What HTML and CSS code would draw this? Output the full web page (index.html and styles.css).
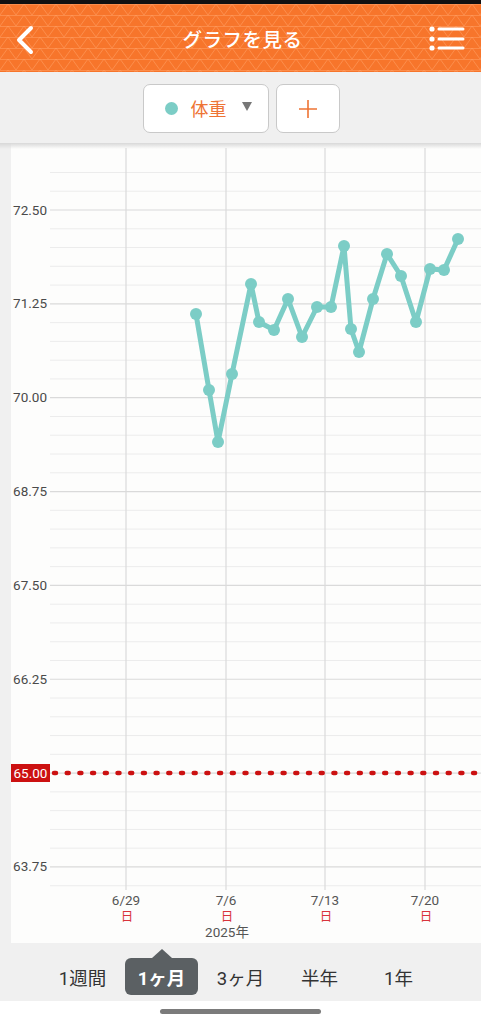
FILE: index.html
```html
<!DOCTYPE html>
<html lang="ja">
<head>
    <meta charset="UTF-8">
    <meta name="viewport" content="width=device-width, initial-scale=1.0">
    <title>グラフを見る</title>
    <link rel="stylesheet" href="styles.css">
</head>
<body>
    <div class="status"></div>
    <header class="topbar">
        <button class="icon-btn back">
            <svg width="24" height="32" viewBox="0 0 24 32"><path d="M17 4 L5 16 L17 28" fill="none" stroke="#fff" stroke-width="4" stroke-linecap="round" stroke-linejoin="round"/></svg>
        </button>
        <h1 class="title">グラフを見る</h1>
        <button class="icon-btn menu">
            <svg width="36" height="26" viewBox="0 0 36 26">
                <circle cx="3" cy="3" r="2.6" fill="#fff"/>
                <circle cx="3" cy="13" r="2.6" fill="#fff"/>
                <circle cx="3" cy="22" r="2.6" fill="#fff"/>
                <path d="M10 3 H34 M10 13 H34 M10 22 H34" stroke="#fff" stroke-width="3" stroke-linecap="round"/>
            </svg>
        </button>
    </header>

    <div class="toolbar">
        <button class="select">
            <span class="dot"></span>
            <span class="select-label">体重</span>
            <span class="caret"></span>
        </button>
        <button class="add">
            <svg width="20" height="20" viewBox="0 0 20 20"><path d="M10 1 V19 M1 10 H19" stroke="#ee7434" stroke-width="1.6"/></svg>
        </button>
    </div>

    <main class="chart-area">
        <div class="chart-card">
            <svg id="chart" width="470" height="795" viewBox="11 148 470 795"></svg>
        </div>
    </main>

    <nav class="tabs">
        <button class="tab">1週間</button>
        <button class="tab active">1ヶ月</button>
        <button class="tab">3ヶ月</button>
        <button class="tab">半年</button>
        <button class="tab">1年</button>
    </nav>
    <div class="home-bar"><span class="indicator"></span></div>

    <script>
        const svg = document.getElementById('chart');
        const NS = 'http://www.w3.org/2000/svg';

        function el(name, attrs, text) {
            const node = document.createElementNS(NS, name);
            for (const k in attrs) node.setAttribute(k, attrs[k]);
            if (text) node.textContent = text;
            svg.appendChild(node);
            return node;
        }

        // value -> y in page coords
        function yOf(v) {
            return 210 + (72.5 - v) / 0.25 * 18.77;
        }

        // horizontal grid, every 0.25kg
        for (let i = 0; i <= 38; i++) {
            const v = 73 - i * 0.25;
            const y = yOf(v);
            const major = i % 5 === 2;
            el('line', { x1: 50, x2: 481, y1: y, y2: y, class: major ? 'grid-major' : 'grid-minor' });
            if (major && Math.abs(v - 65) > 0.01) {
                el('text', { x: 47, y: y + 4.5, class: 'y-label' }, v.toFixed(2));
            }
        }

        // weeks
        const weeks = [[126, '6/29'], [226, '7/6'], [325, '7/13'], [425, '7/20']];
        weeks.forEach(([x, label]) => {
            el('line', { x1: x, x2: x, y1: 148, y2: 890, class: 'grid-major' });
            el('text', { x: x, y: 905, class: 'x-label' }, label);
            el('text', { x: x + 1, y: 921, class: 'x-day' }, '日');
        });
        el('text', { x: 227, y: 937, class: 'x-label' }, '2025年');

        // target line
        el('line', { x1: 54, x2: 481, y1: 773, y2: 773, class: 'target' });
        el('rect', { x: 11, y: 764, width: 39, height: 18, class: 'target-box' });
        el('text', { x: 30.5, y: 778, class: 'target-text' }, '65.00');

        // weight points
        const pts = [
            [196, 314], [209, 390], [218, 442], [232, 374], [251, 284], [259, 322],
            [274, 330], [288, 299], [302, 337], [317, 307], [331, 307], [344, 246],
            [351, 329], [359, 352], [373, 299], [387, 254], [401, 276], [416, 322],
            [430, 269], [444, 270], [458, 239]
        ];
        el('polyline', { points: pts.map(p => p.join(',')).join(' '), class: 'series' });
        pts.forEach(([x, y]) => el('circle', { cx: x, cy: y, r: 6, class: 'series-dot' }));
    </script>
</body>
</html>
```

FILE: styles.css
```css
* {
    box-sizing: border-box;
}
body {
    margin: 0;
    font-family: Roboto, "Noto Sans CJK JP", sans-serif;
    background: #fff;
    width: 481px;
    height: 1024px;
    overflow: hidden;
}
button {
    font-family: inherit;
    cursor: pointer;
}
.status {
    height: 4px;
    background: #111;
}
.topbar {
    height: 68px;
    background-color: #f7752b;
    background-image: url("data:image/svg+xml,%3Csvg xmlns='http://www.w3.org/2000/svg' width='16' height='11'%3E%3Cpath d='M0 11 L8 0 L16 11 M0 0.5 H16' fill='none' stroke='%23ff9d60' stroke-width='1' opacity='0.6'/%3E%3C/svg%3E");
    display: flex;
    align-items: center;
    justify-content: space-between;
    padding: 0 16px 0 14px;
}
.icon-btn {
    background: none;
    border: none;
    padding: 0;
    display: flex;
    align-items: center;
}
.back {
    width: 30px;
    margin-top: 3px;
}
.menu {
    margin-top: 2px;
}
.title {
    margin: 0;
    color: #fff;
    font-size: 19.5px;
    font-weight: 500;
    letter-spacing: 0.5px;
    margin-left: 12px;
}
.toolbar {
    height: 71px;
    background: #f0f0f0;
    display: flex;
    justify-content: center;
    gap: 7px;
    padding-top: 12px;
    padding-left: 1px;
}
.select, .add {
    height: 49px;
    background: #fff;
    border: 1px solid #c9c9c9;
    border-radius: 7px;
}
.select {
    width: 126px;
    display: flex;
    align-items: center;
    padding: 0 0 0 21px;
}
.dot {
    width: 13px;
    height: 13px;
    border-radius: 50%;
    background: #7ccdc6;
}
.select-label {
    color: #ee7434;
    font-size: 18px;
    margin-left: 13px;
    margin-top: -2px;
}
.caret {
    width: 0;
    height: 0;
    border-left: 5px solid transparent;
    border-right: 5px solid transparent;
    border-top: 9px solid #777;
    margin-left: 15px;
    margin-top: -4px;
}
.add {
    width: 64px;
    display: flex;
    align-items: center;
    justify-content: center;
}
.chart-area {
    background: #f0f0f0;
    padding-left: 11px;
    position: relative;
}
.chart-area::before {
    content: "";
    position: absolute;
    left: 0;
    right: 0;
    top: 0;
    height: 6px;
    background: linear-gradient(#d8d8d8, rgba(240, 240, 240, 0));
}
.chart-card {
    background: #fdfdfc;
    height: 800px;
    padding-top: 5px;
}
#chart {
    display: block;
}
.grid-minor {
    stroke: #ececec;
    stroke-width: 1;
}
.grid-major {
    stroke: #dadada;
    stroke-width: 1.2;
}
.y-label {
    font-size: 13.5px;
    fill: #4a4a4a;
    text-anchor: end;
}
.x-label {
    font-size: 13.5px;
    fill: #555;
    text-anchor: middle;
}
.x-day {
    font-size: 12.5px;
    fill: #d8343c;
    text-anchor: middle;
    font-family: "Noto Sans CJK JP", sans-serif;
}
.target {
    stroke: #cc1111;
    stroke-width: 4.5;
    stroke-dasharray: 2 10.7;
    stroke-linecap: round;
}
.target-box {
    fill: #cc1111;
}
.target-text {
    font-size: 13.5px;
    fill: #fff;
    text-anchor: middle;
}
.series {
    fill: none;
    stroke: #7ccdc6;
    stroke-width: 5;
    stroke-linejoin: round;
}
.series-dot {
    fill: #7ccdc6;
}
.tabs {
    height: 58px;
    background: #f0f0f0;
    display: flex;
    justify-content: center;
    gap: 6px;
    padding-top: 15px;
}
.tab {
    width: 73px;
    height: 37px;
    border: none;
    background: none;
    font-size: 18.5px;
    color: #333;
    padding: 0;
    border-radius: 6px;
    position: relative;
}
.tab.active {
    background: #5b6063;
    color: #fff;
    font-weight: 700;
}
.tab.active::before {
    content: "";
    position: absolute;
    left: 50%;
    top: -9px;
    margin-left: -10px;
    border-left: 10px solid transparent;
    border-right: 10px solid transparent;
    border-bottom: 9px solid #5b6063;
}
.home-bar {
    height: 23px;
    background: #fff;
    display: flex;
    justify-content: center;
    padding-top: 8px;
}
.indicator {
    width: 161px;
    height: 5px;
    border-radius: 3px;
    background: #7b7b7b;
}
```
